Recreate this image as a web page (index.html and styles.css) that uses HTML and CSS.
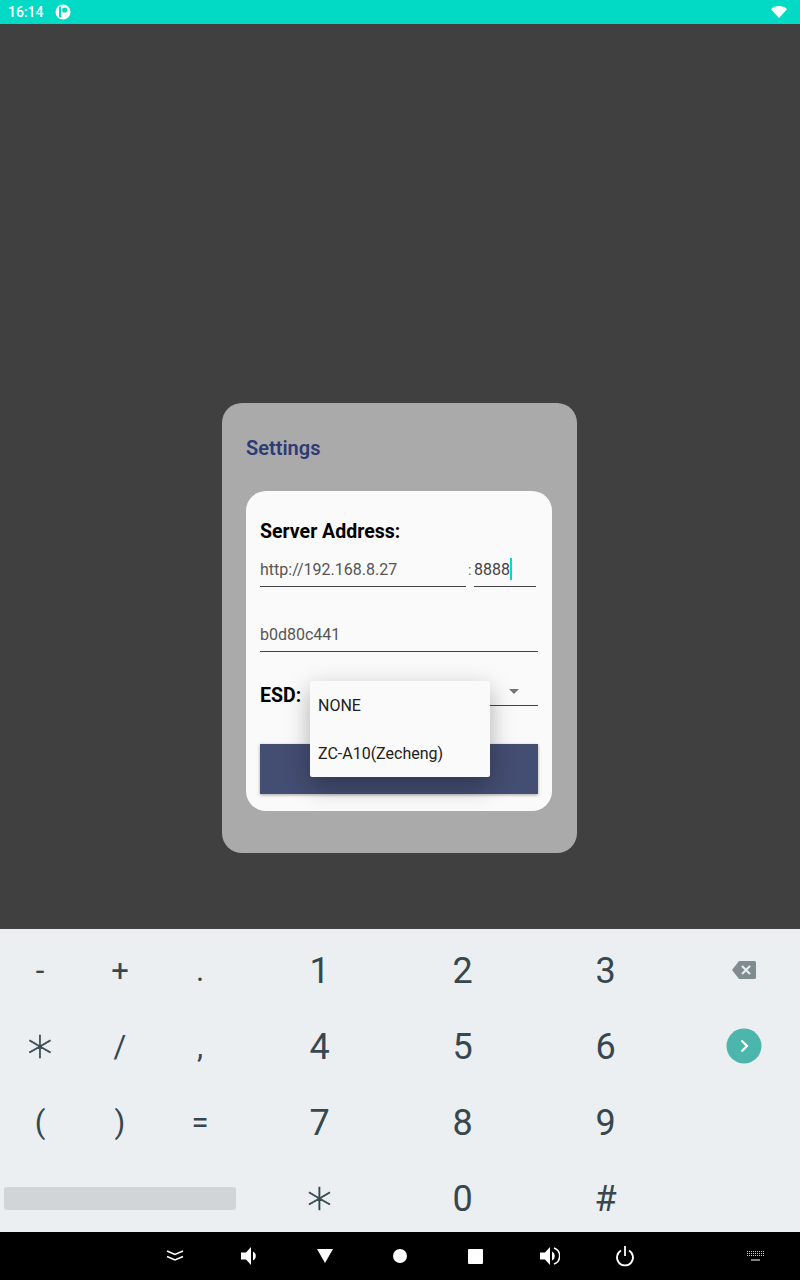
FILE: index.html
```html
<!DOCTYPE html>
<html lang="en">
<head>
    <meta charset="UTF-8">
    <title>Settings</title>
    <link rel="stylesheet" href="styles.css">
</head>
<body>
    <div class="status-bar">
        <span class="clock">16:14</span>
        <svg class="status-app" width="16" height="16" viewBox="0 0 16 16">
            <circle cx="8" cy="8" r="7.500" fill="#fff"/>
            <rect x="4" y="2.500" width="2" height="11" fill="#03dac5"/>
            <circle cx="9.700" cy="6" r="2.600" fill="#03dac5"/>
        </svg>
        <svg class="status-wifi" width="16" height="12" viewBox="0 0 16 12">
            <path d="M0 3.200C2 1.200 5 0 8 0s6 1.200 8 3.200L8 12z" fill="#fff"/>
        </svg>
    </div>

    <div class="backdrop">
        <div class="dialog">
            <h2 class="dialog-title">Settings</h2>
            <div class="card">
                <div class="section-label">Server Address:</div>
                <div class="address-row">
                    <div class="field field-host">http://192.168.8.27</div>
                    <span class="colon">:</span>
                    <div class="field field-port">8888<span class="caret"></span></div>
                </div>
                <div class="field field-code">b0d80c441</div>
                <div class="esd-row">
                    <span class="section-label esd-label">ESD:</span>
                    <div class="spinner"><span class="spinner-arrow"></span></div>
                </div>
                <div class="submit-btn"></div>
            </div>
        </div>
        <div class="menu">
            <div class="menu-item">NONE</div>
            <div class="menu-item">ZC-A10(Zecheng)</div>
        </div>
    </div>

    <div class="keyboard">
        <div class="keys keys-symbols">
            <div class="key">-</div>
            <div class="key">+</div>
            <div class="key">.</div>
            <div class="key key-star">*</div>
            <div class="key">/</div>
            <div class="key">,</div>
            <div class="key">(</div>
            <div class="key">)</div>
            <div class="key">=</div>
            <div class="key key-space"><span class="space-bar"></span></div>
        </div>
        <div class="keys keys-digits">
            <div class="key">1</div>
            <div class="key">2</div>
            <div class="key">3</div>
            <div class="key">4</div>
            <div class="key">5</div>
            <div class="key">6</div>
            <div class="key">7</div>
            <div class="key">8</div>
            <div class="key">9</div>
            <div class="key key-star">*</div>
            <div class="key">0</div>
            <div class="key">#</div>
        </div>
        <div class="keys-actions">
            <div class="key">
                <svg width="24" height="18" viewBox="0 0 24 18">
                    <path d="M7 0h15.500a1.500 1.500 0 0 1 1.500 1.500v15a1.500 1.500 0 0 1-1.500 1.500H7L0 9z" fill="#7f8c90"/>
                    <path d="M10 5l8 8M18 5l-8 8" stroke="#eceff1" stroke-width="2"/>
                </svg>
            </div>
            <div class="key">
                <svg width="36" height="36" viewBox="0 0 36 36">
                    <circle cx="18" cy="18" r="17.500" fill="#4db6ac"/>
                    <path d="M15.500 12.500l5.500 5.500-5.500 5.500" fill="none" stroke="#fff" stroke-width="2.200"/>
                </svg>
            </div>
        </div>
    </div>

    <div class="nav-bar">
        <div class="nav-slot">
            <svg width="18" height="14" viewBox="0 0 18 14" fill="none" stroke="#fff" stroke-width="1.600">
                <path d="M1 2l8 3.500L17 2M1 7.500L9 11l8-3.500"/>
            </svg>
        </div>
        <div class="nav-slot">
            <svg width="20" height="20" viewBox="0 0 20 20" fill="#fff">
                <path d="M1 6.500h5L11 1v18l-5-5.500H1z"/>
                <path d="M13 5.500a5 5 0 0 1 0 9z"/>
            </svg>
        </div>
        <div class="nav-slot">
            <svg width="16" height="14" viewBox="0 0 16 14" fill="#fff">
                <path d="M0 0h16L8 14z"/>
            </svg>
        </div>
        <div class="nav-slot">
            <svg width="14" height="14" viewBox="0 0 14 14" fill="#fff">
                <circle cx="7" cy="7" r="7"/>
            </svg>
        </div>
        <div class="nav-slot">
            <svg width="15" height="15" viewBox="0 0 15 15" fill="#fff">
                <rect width="15" height="15" rx="1"/>
            </svg>
        </div>
        <div class="nav-slot">
            <svg width="20" height="20" viewBox="0 0 20 20" fill="#fff">
                <path d="M0 6.500h5L10 1v18l-5-5.500H0z"/>
                <path d="M12 5.500a5 5 0 0 1 0 9z"/>
                <path d="M14 2a8.500 8.500 0 0 1 0 16" fill="none" stroke="#fff" stroke-width="1.500"/>
            </svg>
        </div>
        <div class="nav-slot">
            <svg width="20" height="22" viewBox="0 0 20 22" fill="none" stroke="#fff" stroke-width="1.800">
                <path d="M10 1v10"/>
                <path d="M6 5.500a8 8 0 1 0 8 0"/>
            </svg>
        </div>
        <svg class="nav-keyboard" width="17" height="12" viewBox="0 0 17 12" fill="none" stroke="#ccc" stroke-dasharray="1 1">
            <path d="M0 1.500h17M0 3.500h17M0 5.500h17"/>
            <path d="M4 10h9" stroke="#fff" stroke-dasharray="none"/>
        </svg>
    </div>
</body>
</html>
```

FILE: styles.css
```css
body {
    margin: 0;
    width: 800px;
    height: 1280px;
    display: flex;
    flex-direction: column;
    overflow: hidden;
    font-family: Roboto, sans-serif;
}
.status-bar {
    height: 24px;
    flex: none;
    display: flex;
    align-items: center;
    padding: 0 13px 0 8px;
    background: #03dac5;
    color: #fff;
}
.clock {
    font-size: 14px;
    font-weight: 500;
}
.status-app {
    margin-left: 11px;
}
.status-wifi {
    margin-left: auto;
}
.backdrop {
    flex: 1;
    position: relative;
    background: #404040;
    padding: 379px 0 0 222px;
}
.dialog {
    width: 355px;
    height: 450px;
    box-sizing: border-box;
    padding: 33px 25px 0 24px;
    background: #aaaaaa;
    border-radius: 20px;
}
.dialog-title {
    margin: 0 0 31px;
    height: 24px;
    line-height: 24px;
    font-size: 20px;
    font-weight: 600;
    color: #2d3a75;
}
.card {
    width: 306px;
    height: 320px;
    box-sizing: border-box;
    padding: 29px 14px 0;
    background: #fafafa;
    border-radius: 20px;
}
.section-label {
    font-size: 19.5px;
    font-weight: 700;
    line-height: 24px;
    color: #000;
}
.address-row {
    display: flex;
    margin-top: 12px;
}
.field {
    height: 31px;
    line-height: 28px;
    box-sizing: border-box;
    border-bottom: 1px solid #444;
    font-size: 16px;
    color: #555;
}
.field-host {
    width: 206px;
}
.colon {
    width: 8px;
    padding-left: 2px;
    box-sizing: border-box;
    line-height: 28px;
    font-size: 14px;
    color: #666;
}
.field-port {
    width: 62px;
    color: #444;
}
.caret {
    display: inline-block;
    width: 2px;
    height: 22px;
    vertical-align: -5px;
    background: #03dac5;
}
.field-code {
    margin-top: 34px;
}
.esd-row {
    display: flex;
    margin-top: 26px;
    height: 28px;
}
.esd-label {
    margin-top: 6px;
}
.spinner {
    flex: 1;
    height: 28px;
    margin-left: 16px;
    position: relative;
    box-sizing: border-box;
    border-bottom: 1px solid #444;
}
.spinner-arrow {
    position: absolute;
    right: 19px;
    top: 11px;
    border-style: solid;
    border-width: 5px 5px 0;
    border-color: #757575 transparent transparent;
}
.submit-btn {
    height: 50px;
    margin-top: 38px;
    background: #444d72;
    box-shadow: 0 1px 3px rgba(0, 0, 0, 0.35);
}
.menu {
    position: absolute;
    left: 310px;
    top: 657px;
    width: 180px;
    height: 96px;
    background: #fafafa;
    border-radius: 2px;
    box-shadow: 0 8px 24px rgba(0, 0, 0, 0.3);
}
.menu-item {
    height: 48px;
    line-height: 49px;
    padding-left: 8px;
    font-size: 16px;
    color: #212121;
}
.keyboard {
    height: 303px;
    flex: none;
    display: flex;
    background: #eceff1;
    color: #37474f;
}
.keys {
    display: grid;
    grid-auto-rows: 76px;
    align-items: center;
}
.keys-symbols {
    width: 240px;
    padding-top: 3px;
    grid-template-columns: repeat(3, 80px);
    font-size: 31px;
}
.keys-digits {
    width: 429px;
    margin-left: 8px;
    padding-top: 4px;
    grid-template-columns: repeat(3, 143px);
    font-size: 36px;
}
.keys-actions {
    flex: 1;
    padding: 3px 0 0 11px;
    display: grid;
    grid-auto-rows: 76px;
    align-items: center;
}
.key {
    height: 76px;
    display: flex;
    justify-content: center;
    align-items: center;
}
.key-star {
    box-sizing: border-box;
    padding-top: 18px;
    font-family: "DejaVu Sans", sans-serif;
    font-size: 50px;
    line-height: 50px;
    font-weight: 200;
    -webkit-text-stroke: 0.6px #37474f;
}
.keys-digits .key-star {
    padding-top: 16px;
}
.key-space {
    grid-column: 1 / 4;
}
.space-bar {
    width: 232px;
    height: 23px;
    background: #d1d5d8;
    border-radius: 3px;
}
.nav-bar {
    height: 48px;
    flex: none;
    position: relative;
    display: flex;
    align-items: center;
    justify-content: center;
    background: #000;
}
.nav-slot {
    width: 75px;
    display: flex;
    justify-content: center;
}
.nav-keyboard {
    position: absolute;
    right: 36px;
    top: 18px;
}
```
